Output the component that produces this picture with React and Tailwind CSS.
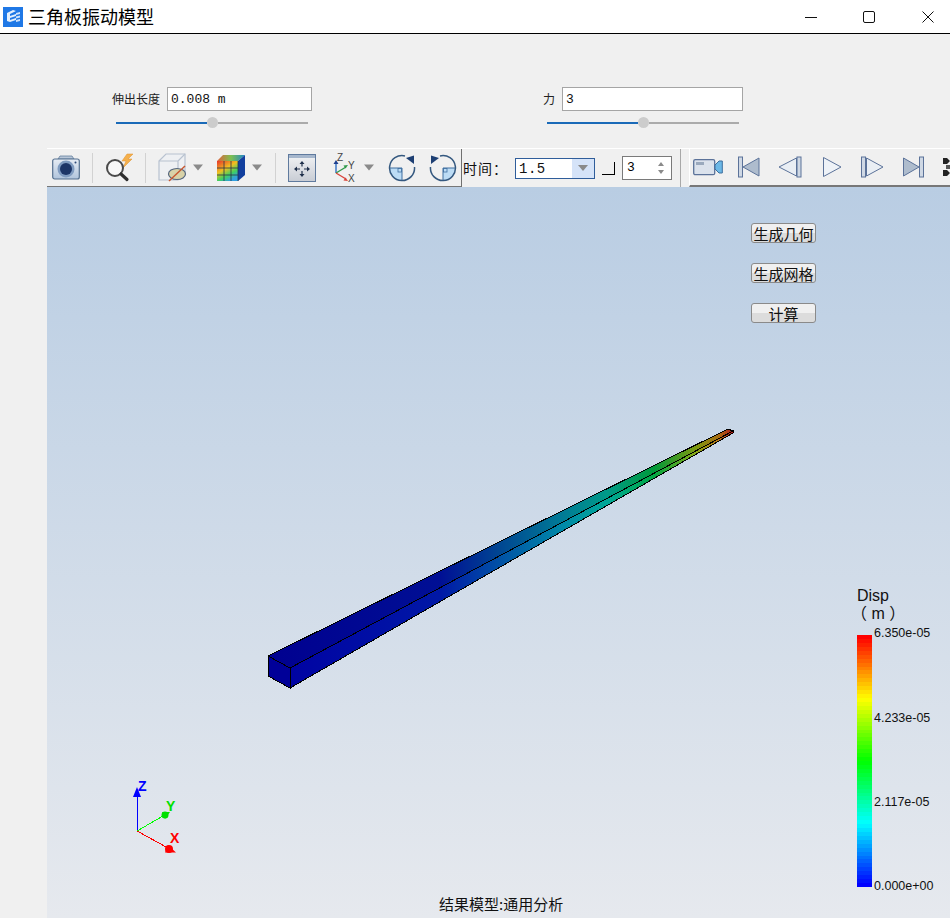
import React from 'react';

const cjk = "font-['Noto_Sans_CJK_SC','Liberation_Sans',sans-serif]";
const mono = "font-['Liberation_Mono','Noto_Sans_CJK_SC',monospace]";

// jet style colour ramp, value 0 = blue, 1 = red
const jet = (t) => {
  const seg = (a) => Math.round(255 * Math.min(1, Math.max(0, a)));
  if (t < 0.25) return `rgb(0,${seg(t * 4)},255)`;
  if (t < 0.5) return `rgb(0,255,${seg(1 - (t - 0.25) * 4)})`;
  if (t < 0.75) return `rgb(${seg((t - 0.5) * 4)},255,0)`;
  return `rgb(255,${seg(1 - (t - 0.75) * 4)},0)`;
};

const bands = Array.from({ length: 64 }, (_, i) => jet(1 - i / 63));

const Slider = ({ className }) => (
  <div className={`flex items-center w-[192px] h-[11px] ${className}`}>
    <div className="w-[91px] h-[2px] bg-[#1a6ab8]" />
    <div className="w-[11px] h-[11px] rounded-full bg-[#cccccc] shrink-0" />
    <div className="flex-1 h-[2px] bg-[#ababab]" />
  </div>
);

const Field = ({ value, className }) => (
  <div className={`h-[24px] bg-white border border-[#a5a5a5] pl-[3px] text-[13px] leading-[24px] text-[#111] ${mono} ${className}`}>
    {value}
  </div>
);

const Sep = ({ className }) => <div className={`w-px h-[30px] bg-[#d2d2d2] shrink-0 ${className}`} />;

const Caret = ({ className }) => (
  <svg width="12" height="7" viewBox="0 0 12 7" className={`shrink-0 ${className}`}>
    <path d="M1 0.5h10L6 6.5z" fill="#8a8a8a" />
  </svg>
);

const AppIcon = () => (
  <svg width="20" height="20" viewBox="0 0 20 20" className="shrink-0">
    <rect width="20" height="20" fill="#1f78e6" />
    <path d="M4 6l6-3 3 1-6 3v2l6-2v2l-6 2v2l6-2v2l-6 2-3-1z" fill="#e4effc" />
    <path d="M13 6l4-1v2l-4 1zM13 9.500l4-1v2l-4 1zM13 13l4-1v2l-4 1z" fill="#cfe2fa" />
  </svg>
);

const Camera = () => (
  <svg width="28" height="28" viewBox="0 0 28 28" className="shrink-0">
    <defs>
      <linearGradient id="camBody" x1="0" y1="0" x2="0" y2="1">
        <stop offset="0" stopColor="#e6ecf4" />
        <stop offset="1" stopColor="#b0c4dc" />
      </linearGradient>
    </defs>
    <path d="M6 5l2-3h12l2 3z" fill="#b8c6d8" stroke="#66809e" strokeWidth="0.8" />
    <rect x="0.700" y="5" width="26.600" height="20" rx="2" fill="url(#camBody)" stroke="#55708f" strokeWidth="1.200" />
    <circle cx="14" cy="15" r="8.500" fill="#7f9bc0" />
    <circle cx="14" cy="15" r="6" fill="#1c3567" />
    <circle cx="23.500" cy="8.500" r="1" fill="#2e4a78" />
  </svg>
);

const Zoom = () => (
  <svg width="30" height="30" viewBox="0 0 30 30" className="shrink-0">
    <path d="M22 1l-5 7h4l-3 7 9-9h-4l5-5z" fill="#f5b04c" stroke="#dd9030" strokeWidth="0.500" />
    <circle cx="10" cy="15" r="8" fill="#f7f7f7" stroke="#4a4a4a" strokeWidth="2" />
    <path d="M16 21l6 5.500" stroke="#2e2e2e" strokeWidth="3.200" strokeLinecap="round" />
  </svg>
);

const BoxIcon = () => (
  <svg width="30" height="30" viewBox="0 0 30 30" className="shrink-0">
    <path d="M1 8L8 1h19v19l-7 7H1z" fill="#eef0f3" stroke="#b8c2d0" strokeWidth="1.200" />
    <path d="M1 8h19v19M20 8l7-7" fill="none" stroke="#b8c2d0" strokeWidth="1.200" />
    <ellipse cx="19" cy="21" rx="8.500" ry="5.500" fill="#d8d2a8" stroke="#55667e" strokeWidth="1.200" />
    <path d="M11 28L27 13" stroke="#c8562e" strokeWidth="1.400" />
  </svg>
);

const ColorCube = () => (
  <svg width="28" height="28" viewBox="0 0 28 28" className="shrink-0">
    <defs>
      <linearGradient id="cubeFace" x1="0" y1="0" x2="0.600" y2="1">
        <stop offset="0" stopColor="#e8342a" />
        <stop offset="0.450" stopColor="#f0c020" />
        <stop offset="0.750" stopColor="#40d060" />
        <stop offset="1" stopColor="#30a0e0" />
      </linearGradient>
      <linearGradient id="cubeTop" x1="0" y1="0" x2="1" y2="0">
        <stop offset="0" stopColor="#e2603a" />
        <stop offset="0.500" stopColor="#7cc050" />
        <stop offset="1" stopColor="#1e86c8" />
      </linearGradient>
    </defs>
    <path d="M0 7L6 1h22L21 7z" fill="url(#cubeTop)" />
    <path d="M21 7l7-6v20l-7 6z" fill="#123f9e" />
    <rect x="0" y="7" width="21" height="20" fill="url(#cubeFace)" />
    <path d="M7 7v20M14 7v20M0 14h21M0 21h21M21 7v20" stroke="#27334a" strokeWidth="0.800" />
  </svg>
);

const FitAll = () => (
  <svg width="28" height="28" viewBox="0 0 28 28" className="shrink-0">
    <defs>
      <linearGradient id="fitBg" x1="0" y1="0" x2="0" y2="1">
        <stop offset="0" stopColor="#f2f3f5" />
        <stop offset="1" stopColor="#c8ccd4" />
      </linearGradient>
    </defs>
    <rect x="0.500" y="0.500" width="27" height="27" fill="url(#fitBg)" stroke="#5f7a9e" />
    <rect x="1" y="1" width="26" height="3" fill="#a5b6cc" />
    <path d="M14 9.500v3M14 17v3M9 15h3M16 15h3" stroke="#1f2f4a" strokeWidth="1.200" />
    <path d="M14 7l-2.500 3h5zM14 23l-2.500-3h5zM6 15l3-2.500v5zM22 15l-3-2.500v5z" fill="#1f2f4a" />
  </svg>
);

const Axes = () => (
  <svg width="28" height="30" viewBox="0 0 28 30" className="shrink-0 font-['Liberation_Sans',sans-serif]">
    <path d="M3 20V10" stroke="#2f6fc4" strokeWidth="1.400" />
    <path d="M3 7l-2.500 4h5z" fill="#1d3f8f" />
    <path d="M3 20l10-6" stroke="#2f9a4a" strokeWidth="1.400" />
    <path d="M15 12l-4.500 0.500 2 3z" fill="#2f9a4a" />
    <path d="M3 20l10 6" stroke="#d8443a" strokeWidth="1.400" />
    <path d="M15 28l-4.500-0.500 2-3z" fill="#d8443a" />
    <text x="4" y="8" fontSize="10" fill="#444">Z</text>
    <text x="15" y="16" fontSize="10" fill="#444">Y</text>
    <text x="15" y="29" fontSize="10" fill="#444">X</text>
  </svg>
);

const Rotate = ({ flip }) => (
  <svg width="28" height="28" viewBox="0 0 28 28" className={`shrink-0 ${flip ? '-scale-x-100' : ''}`}>
    <path d="M1.500 14H14v12.500A12.500 12.500 0 0 1 1.500 14z" fill="#bcdcf5" />
    <path d="M14 14H1.500M14 14v12.500" stroke="#3f6fa0" strokeWidth="1" />
    <rect x="10" y="14.500" width="3.500" height="3.500" fill="none" stroke="#3f6fa0" strokeWidth="0.800" />
    <path d="M17 1.900A12.500 12.500 0 1 0 26.500 13" fill="none" stroke="#34587f" strokeWidth="1.500" />
    <path d="M18 4l8-2.500V10z" fill="#1d3f73" />
  </svg>
);

const Video = () => (
  <svg width="30" height="20" viewBox="0 0 30 20" className="shrink-0">
    <rect x="0.700" y="2.700" width="21" height="15" rx="1.500" fill="#dbe2ec" stroke="#5b7299" strokeWidth="1.300" />
    <rect x="3" y="5" width="8" height="3" fill="#9aa9bd" />
    <path d="M22 8l4-4h3.300v12H26l-4-4z" fill="#6cb8e6" stroke="#3d6f9e" />
  </svg>
);

const Media = ({ kind }) => {
  const stroke = '#5b7299';
  const paths = {
    first: (
      <>
        <rect x="0.500" y="1" width="4" height="20" fill="#cfd8e4" stroke={stroke} />
        <path d="M21 2v18L5 11z" fill="#aebccd" stroke={stroke} />
      </>
    ),
    prev: (
      <>
        <path d="M18.500 2v18L1 11z" fill="#e9eef4" stroke={stroke} />
        <rect x="19" y="1" width="4" height="20" fill="#cfd8e4" stroke={stroke} />
      </>
    ),
    play: <path d="M3.500 1.500v19L21 11z" fill="#eef2f7" stroke={stroke} />,
    next: (
      <>
        <rect x="1.500" y="1" width="4" height="20" fill="#cfd8e4" stroke={stroke} />
        <path d="M6.500 2v18L23 11z" fill="#e9eef4" stroke={stroke} />
      </>
    ),
    last: (
      <>
        <path d="M1.500 2v18L17 11z" fill="#aebccd" stroke={stroke} />
        <rect x="17.500" y="1" width="4" height="20" fill="#cfd8e4" stroke={stroke} />
      </>
    ),
  };
  return (
    <svg width="24" height="22" viewBox="0 0 24 22" className="shrink-0">
      {paths[kind]}
    </svg>
  );
};

const ActionButton = ({ label, className }) => (
  <button className={`absolute left-[704px] w-[65px] h-[20px] rounded-[3px] border border-[#8a8a8a] bg-[linear-gradient(#f0f0f0_50%,#dcdcdc_50%)] text-[15px] leading-[17px] text-[#111] ${cjk} ${className}`}>
    {label}
  </button>
);

const LegendLabel = ({ children, className }) => (
  <div className={`absolute left-[827px] text-[12.5px] leading-[14px] text-[#111] font-['Liberation_Sans',sans-serif] ${className}`}>
    {children}
  </div>
);

export default function App() {
  return (
    <div className={`w-[950px] h-[918px] overflow-hidden flex flex-col bg-[#f0f0f0] ${cjk}`}>
      {/* title bar */}
      <div className="h-[34px] shrink-0 flex items-center bg-white border-b border-black pl-[3px]">
        <AppIcon />
        <div className="ml-[5px] text-[18px] text-black">三角板振动模型</div>
        <div className="ml-auto flex items-center pr-[16px]">
          <svg width="12" height="12" viewBox="0 0 12 12"><path d="M0 6.500h12" stroke="#111" /></svg>
          <svg width="12" height="12" viewBox="0 0 12 12" className="ml-[46px]"><rect x="0.500" y="0.500" width="11" height="11" rx="1.500" fill="none" stroke="#111" /></svg>
          <svg width="12" height="12" viewBox="0 0 12 12" className="ml-[47px]"><path d="M0.500 0.500l11 11M11.500 0.500l-11 11" stroke="#111" /></svg>
        </div>
      </div>

      {/* parameter inputs */}
      <div className="h-[114px] shrink-0 flex pt-[53px]">
        <div className="ml-[112px] w-[200px]">
          <div className="flex items-center">
            <span className="text-[12px] w-[48px] text-[#222]">伸出长度</span>
            <Field value="0.008 m" className="ml-[7px] w-[145px]" />
          </div>
          <Slider className="ml-[4px] mt-[6px]" />
        </div>
        <div className="ml-[231px] w-[200px]">
          <div className="flex items-center">
            <span className="text-[12px] w-[12px] text-[#222]">力</span>
            <Field value="3" className="ml-[7px] w-[181px]" />
          </div>
          <Slider className="ml-[4px] mt-[6px]" />
        </div>
      </div>

      {/* toolbar + viewport */}
      <div className="ml-[47px] flex-1 flex flex-col min-h-0">
        <div className="h-[39px] shrink-0 flex items-center border-t border-white">
          <div className="h-full flex items-center w-[414px] border-b border-[#777] shrink-0">
            <div className="ml-[5px]"><Camera /></div>
            <Sep className="ml-[12px]" />
            <div className="ml-[12px]"><Zoom /></div>
            <Sep className="ml-[10px]" />
            <div className="ml-[12px]"><BoxIcon /></div>
            <Caret className="ml-[4px]" />
            <div className="ml-[13px]"><ColorCube /></div>
            <Caret className="ml-[6px]" />
            <Sep className="ml-[12px]" />
            <div className="ml-[12px]"><FitAll /></div>
            <div className="ml-[17px]"><Axes /></div>
            <Caret className="ml-[2px]" />
            <div className="ml-[13px]"><Rotate /></div>
            <div className="ml-[13px]"><Rotate flip /></div>
          </div>
          <div className="w-px h-full bg-[#707070] shrink-0" />
          <div className="h-full w-[218px] flex items-center shrink-0">
            <span className="ml-[1px] w-[52px] text-[14px] tracking-[1px] text-[#111]">时间：</span>
            <div className="w-[80px] h-[21px] flex border border-[#2f5d9a] bg-white">
              <span className={`ml-[3px] flex-1 text-[14px] tracking-[0.5px] leading-[20px] text-[#111] ${mono}`}>1.5</span>
              <div className="w-[22px] bg-[#d5e3f8] flex items-center justify-center">
                <svg width="10" height="6" viewBox="0 0 10 6"><path d="M0 0h10L5 6z" fill="#8a8a8a" /></svg>
              </div>
            </div>
            <div className="ml-[7px] w-[13px] h-[13px] border-r border-b border-black" />
            <div className="ml-[7px] w-[50px] h-[24px] flex items-center border border-[#7a7a7a] bg-white">
              <span className={`ml-[4px] flex-1 text-[13px] ${mono}`}>3</span>
              <svg width="8" height="14" viewBox="0 0 8 14" className="mr-[6px]">
                <path d="M1 5l3-4 3 4zM1 9l3 4 3-4z" fill="#8a8a8a" />
              </svg>
            </div>
          </div>
          <div className="w-px h-full bg-[#a8a8a8] shrink-0" />
          <div className="ml-[8px] h-full flex-1 flex items-center border-l border-b-2 border-l-white border-b-[#777] overflow-hidden">
            <div className="ml-[3px]"><Video /></div>
            <div className="ml-[15px]"><Media kind="first" /></div>
            <div className="ml-[16px]"><Media kind="prev" /></div>
            <div className="ml-[18px]"><Media kind="play" /></div>
            <div className="ml-[16px]"><Media kind="next" /></div>
            <div className="ml-[18px]"><Media kind="last" /></div>
            <svg width="20" height="20" viewBox="0 0 20 20" className="ml-[17px] shrink-0">
              <path d="M0 1h4l3 3-3 3H0zM0 13h4l3 3-3 3H0z" fill="#222" />
              <path d="M3 8h4v4H3z" fill="#555" />
            </svg>
          </div>
        </div>

        {/* 3D viewport */}
        <div className="relative flex-1 bg-[linear-gradient(#b9cde3,#e6e9ee)]">
          <svg width="903" height="731" viewBox="47 187 903 731" className="absolute inset-0">
            <defs>
              <linearGradient id="beamTop" gradientUnits="userSpaceOnUse" x1="268" y1="0" x2="733" y2="0">
                <stop offset="0" stopColor="#000090" />
                <stop offset="0.37" stopColor="#000f94" />
                <stop offset="0.5" stopColor="#004792" />
                <stop offset="0.63" stopColor="#007a96" />
                <stop offset="0.73" stopColor="#009a88" />
                <stop offset="0.83" stopColor="#009a3a" />
                <stop offset="0.92" stopColor="#7d9a10" />
                <stop offset="0.97" stopColor="#a86a10" />
                <stop offset="1" stopColor="#b01818" />
              </linearGradient>
              <linearGradient id="beamSide" gradientUnits="userSpaceOnUse" x1="268" y1="0" x2="733" y2="0">
                <stop offset="0" stopColor="#0000a2" />
                <stop offset="0.37" stopColor="#0018a6" />
                <stop offset="0.5" stopColor="#0052a6" />
                <stop offset="0.63" stopColor="#0088a8" />
                <stop offset="0.73" stopColor="#00a898" />
                <stop offset="0.83" stopColor="#00a842" />
                <stop offset="0.92" stopColor="#88a814" />
                <stop offset="0.97" stopColor="#b87414" />
                <stop offset="1" stopColor="#c01c1c" />
              </linearGradient>
            </defs>
            <g shapeRendering="crispEdges" stroke="#000" strokeWidth="1">
              <path d="M268 656L290 668L733 431L728 429z" fill="url(#beamTop)" />
              <path d="M290 668V688L733 433V431z" fill="url(#beamSide)" />
              <path d="M268 656L290 668V688L268 676z" fill="#000098" />
            </g>

            {/* axis triad */}
            <g shapeRendering="crispEdges">
              <path d="M137 831V795" stroke="#0000ff" />
              <path d="M137 831L163 816" stroke="#00ff00" />
              <path d="M137 831L168 848" stroke="#ff0000" />
            </g>
            <path d="M137 787l-4 10h8z" fill="#0000ff" />
            <path d="M170 812l-8 0 3 7z" fill="#00e000" />
            <path d="M168 845l8 7.500-11 0z" fill="#ff0000" />
            <circle cx="165" cy="815" r="3.500" fill="#00e000" />
            <circle cx="169" cy="849" r="4" fill="#ff0000" />
            <g fontSize="14" fontWeight="700" fontFamily="Liberation Sans, sans-serif">
              <text x="138" y="791" fill="#0000ff">Z</text>
              <text x="166" y="811" fill="#00e000">Y</text>
              <text x="170" y="843" fill="#ff0000">X</text>
            </g>
          </svg>

          <ActionButton label="生成几何" className="top-[36px]" />
          <ActionButton label="生成网格" className="top-[76px]" />
          <ActionButton label="计算" className="top-[116px]" />

          <div className="absolute left-[810px] top-[400px] text-[16px] leading-[18px] text-[#111] font-['Liberation_Sans','Noto_Sans_CJK_SC',sans-serif]">
            <div>Disp</div>
            <div className="-ml-[6px]">（ m ）</div>
          </div>
          <div className="absolute left-[810px] top-[448px] w-[15px] h-[252px] flex flex-col">
            {bands.map((c, i) => (
              <div key={i} className="flex-1" style={{ backgroundColor: c }} />
            ))}
          </div>
          <LegendLabel className="top-[439px]">6.350e-05</LegendLabel>
          <LegendLabel className="top-[524px]">4.233e-05</LegendLabel>
          <LegendLabel className="top-[608px]">2.117e-05</LegendLabel>
          <LegendLabel className="top-[692px]">0.000e+00</LegendLabel>

          <div className="absolute left-[392px] top-[708px] text-[15px] leading-[18px] text-[#111]">结果模型:通用分析</div>
        </div>
      </div>
    </div>
  );
}
